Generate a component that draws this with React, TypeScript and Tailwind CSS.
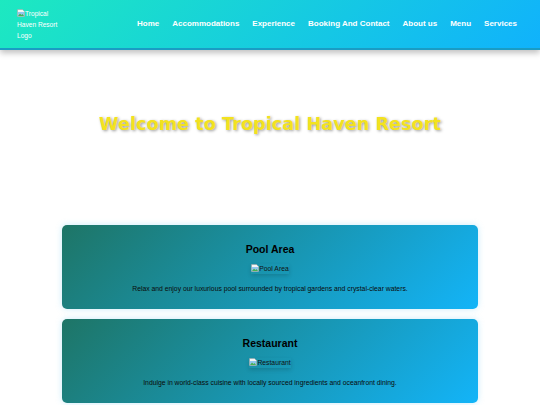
import React from "react";

const navLinks = [
  "Home",
  "Accommodations",
  "Experience",
  "Booking And Contact",
  "About us",
  "Menu",
  "Services",
];

const features = [
  {
    title: "Pool Area",
    alt: "Pool Area",
    text: "Relax and enjoy our luxurious pool surrounded by tropical gardens and crystal-clear waters.",
  },
  {
    title: "Restaurant",
    alt: "Restaurant",
    text: "Indulge in world-class cuisine with locally sourced ingredients and oceanfront dining.",
  },
];

function BrokenImage() {
  return (
    <svg width="8" height="8" viewBox="0 0 16 16" className="inline-block align-[-1px]">
      <path d="M1 1h10l4 4v10H1z" fill="#f4f4f4" stroke="#9a9a9a" strokeWidth="1" />
      <path d="M2 6h12v8H2z" fill="#8fc7ef" />
      <path d="M2 14l4-5 3 3 2-2 3 4z" fill="#4caf50" />
    </svg>
  );
}

export default function App() {
  return (
    <div className="min-h-[405px] bg-white font-['Liberation_Sans',Arial,sans-serif]">
      <header className="flex h-[50px] items-center justify-between border-b-2 border-[#1a9cc4] bg-[linear-gradient(135deg,#1de9c0,#10b2fc)] pl-[17px] pr-[23px] shadow-[0_3px_6px_rgba(0,0,0,0.25)]">
        <div className="w-[46px] text-[6.6px] leading-[11px] text-white">
          <BrokenImage />
          Tropical Haven Resort Logo
        </div>
        <nav className="flex gap-[13px] text-[8px] font-bold text-white">
          {navLinks.map((link) => (
            <a key={link} href="#">
              {link}
            </a>
          ))}
        </nav>
      </header>

      <section className="flex h-[150px] items-center justify-center pb-[2px]">
        <h1 className="font-['Comic_Sans_MS','DejaVu_Sans',cursive] text-[17.7px] font-bold text-[#f3e21f] [text-shadow:1px_1px_3px_rgba(0,0,0,0.4)]">
          Welcome to Tropical Haven Resort
        </h1>
      </section>

      <main className="mx-[62px] mt-[25px] flex flex-col gap-[10px]">
        {features.map((f) => (
          <div
            key={f.title}
            className="flex flex-col items-center rounded-[5px] bg-[linear-gradient(135deg,#1e7566,#13b4f8)] pb-[16px] pt-[17px] shadow-[0_0_6px_rgba(100,200,240,0.35)]"
          >
            <h2 className="text-[10.5px] font-bold leading-[14px] text-black">{f.title}</h2>
            <div className="mt-[8px] text-[6.8px] leading-[10px] text-[#111] shadow-[0_2px_4px_rgba(0,0,0,0.15)]">
              <BrokenImage />
              {f.alt}
            </div>
            <p className="mt-[10px] text-[6.8px] leading-[9px] text-[#0a0a0a]">{f.text}</p>
          </div>
        ))}
      </main>
    </div>
  );
}
